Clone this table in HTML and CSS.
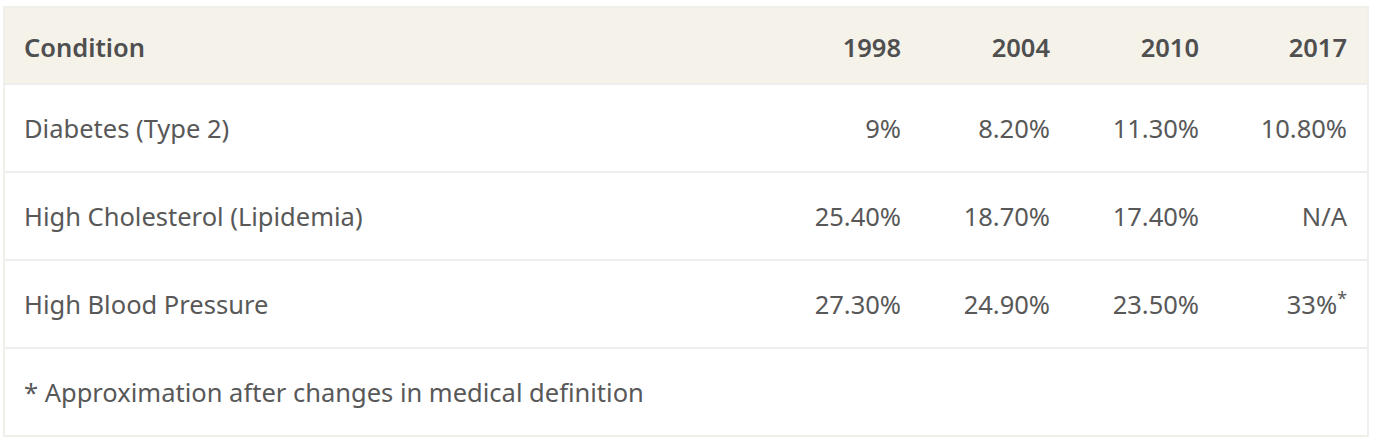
FILE: index.html
```html
<!DOCTYPE html>
<html lang="en">
<head>
<meta charset="utf-8">
<title>Conditions</title>
<link rel="stylesheet" href="styles.css">
</head>
<body>
<div class="wrap">
  <table class="data">
    <thead>
      <tr>
        <th class="label">Condition</th>
        <th class="num">1998</th>
        <th class="num">2004</th>
        <th class="num">2010</th>
        <th class="num">2017</th>
      </tr>
    </thead>
    <tbody>
      <tr>
        <td class="label">Diabetes (Type 2)</td>
        <td class="num">9%</td>
        <td class="num">8.20%</td>
        <td class="num">11.30%</td>
        <td class="num">10.80%</td>
      </tr>
      <tr>
        <td class="label">High Cholesterol (Lipidemia)</td>
        <td class="num">25.40%</td>
        <td class="num">18.70%</td>
        <td class="num">17.40%</td>
        <td class="num">N/A</td>
      </tr>
      <tr>
        <td class="label">High Blood Pressure</td>
        <td class="num">27.30%</td>
        <td class="num">24.90%</td>
        <td class="num">23.50%</td>
        <td class="num">33%<sup class="mark">*</sup></td>
      </tr>
      <tr class="note">
        <td class="label" colspan="5">* Approximation after changes in medical definition</td>
      </tr>
    </tbody>
  </table>
</div>
</body>
</html>
```
FILE: styles.css
```css
html, body {
  margin: 0;
  padding: 0;
  background: #ffffff;
}

.wrap {
  padding: 6px 8px 0 3px;
}

.data {
  width: 1366px;
  border-collapse: collapse;
  table-layout: fixed;
  border: 2px solid #f1efe9;
  font-family: "Noto Sans", "Open Sans", sans-serif;
  font-size: 25.5px;
  color: #585858;
}

.data th,
.data td {
  box-sizing: border-box;
  padding: 0 20px 0 19px;
  white-space: nowrap;
}

.data thead th {
  height: 77px;
  padding-top: 2px;
  background: #f5f2ea;
  font-weight: 600;
  color: #4f4f4f;
}

.data tbody td {
  height: 88px;
  border-top: 2px solid #eeeeee;
}

.label {
  text-align: left;
}

.num {
  width: 149px;
  text-align: right;
}

.mark {
  font-size: 0.7em;
  line-height: 0;
  vertical-align: 0.5em;
}
```
